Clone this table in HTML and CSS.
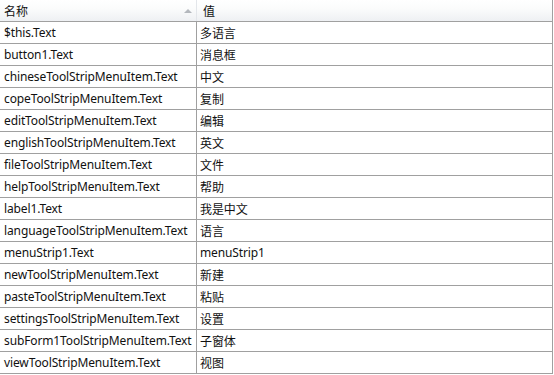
FILE: index.html
```html
<!DOCTYPE html>
<html lang="zh">
<head>
<meta charset="utf-8">
<link rel="stylesheet" href="styles.css">
</head>
<body>
<div class="grid">
  <div class="row head">
    <div class="cell name">名称<span class="sort"></span></div>
    <div class="cell value">值</div>
  </div>
  <div class="row"><div class="cell name">$this.Text</div><div class="cell value">多语言</div></div>
  <div class="row"><div class="cell name">button1.Text</div><div class="cell value">消息框</div></div>
  <div class="row"><div class="cell name">chineseToolStripMenuItem.Text</div><div class="cell value">中文</div></div>
  <div class="row"><div class="cell name">copeToolStripMenuItem.Text</div><div class="cell value">复制</div></div>
  <div class="row"><div class="cell name">editToolStripMenuItem.Text</div><div class="cell value">编辑</div></div>
  <div class="row"><div class="cell name">englishToolStripMenuItem.Text</div><div class="cell value">英文</div></div>
  <div class="row"><div class="cell name">fileToolStripMenuItem.Text</div><div class="cell value">文件</div></div>
  <div class="row"><div class="cell name">helpToolStripMenuItem.Text</div><div class="cell value">帮助</div></div>
  <div class="row"><div class="cell name">label1.Text</div><div class="cell value">我是中文</div></div>
  <div class="row"><div class="cell name">languageToolStripMenuItem.Text</div><div class="cell value">语言</div></div>
  <div class="row"><div class="cell name">menuStrip1.Text</div><div class="cell value">menuStrip1</div></div>
  <div class="row"><div class="cell name">newToolStripMenuItem.Text</div><div class="cell value">新建</div></div>
  <div class="row"><div class="cell name">pasteToolStripMenuItem.Text</div><div class="cell value">粘贴</div></div>
  <div class="row"><div class="cell name">settingsToolStripMenuItem.Text</div><div class="cell value">设置</div></div>
  <div class="row"><div class="cell name">subForm1ToolStripMenuItem.Text</div><div class="cell value">子窗体</div></div>
  <div class="row"><div class="cell name">viewToolStripMenuItem.Text</div><div class="cell value">视图</div></div>
</div>
</body>
</html>
```
FILE: styles.css
```css
html, body {
  margin: 0;
  padding: 0;
  background: #ffffff;
}
body {
  font-family: "Noto Sans", "Noto Sans CJK SC", sans-serif;
  font-size: 12px;
  letter-spacing: -0.12px;
  color: #111111;
  width: 554px;
  height: 375px;
  overflow: hidden;
}
.grid {
  width: 552px;
  border-right: 1px solid #a0a0a0;
}
.row {
  display: flex;
  height: 21px;
  border-bottom: 1px solid #a0a0a0;
}
.cell {
  display: flex;
  align-items: center;
  white-space: nowrap;
  overflow: hidden;
}
.name {
  width: 192px;
  padding-left: 4px;
  border-right: 1px solid #a0a0a0;
}
.value {
  flex: 1;
  padding-left: 3px;
}
.head {
  background: linear-gradient(#ffffff 0%, #fbfcfc 40%, #eef0f3 100%);
}
.head .name {
  position: relative;
  border-right: 1px solid #e3e6ea;
}
.head .value {
  padding-left: 6px;
}
.sort {
  position: absolute;
  right: 4px;
  top: 9px;
  width: 0;
  height: 0;
  border-left: 4px solid transparent;
  border-right: 4px solid transparent;
  border-bottom: 4px solid #b4b8bd;
}
```
